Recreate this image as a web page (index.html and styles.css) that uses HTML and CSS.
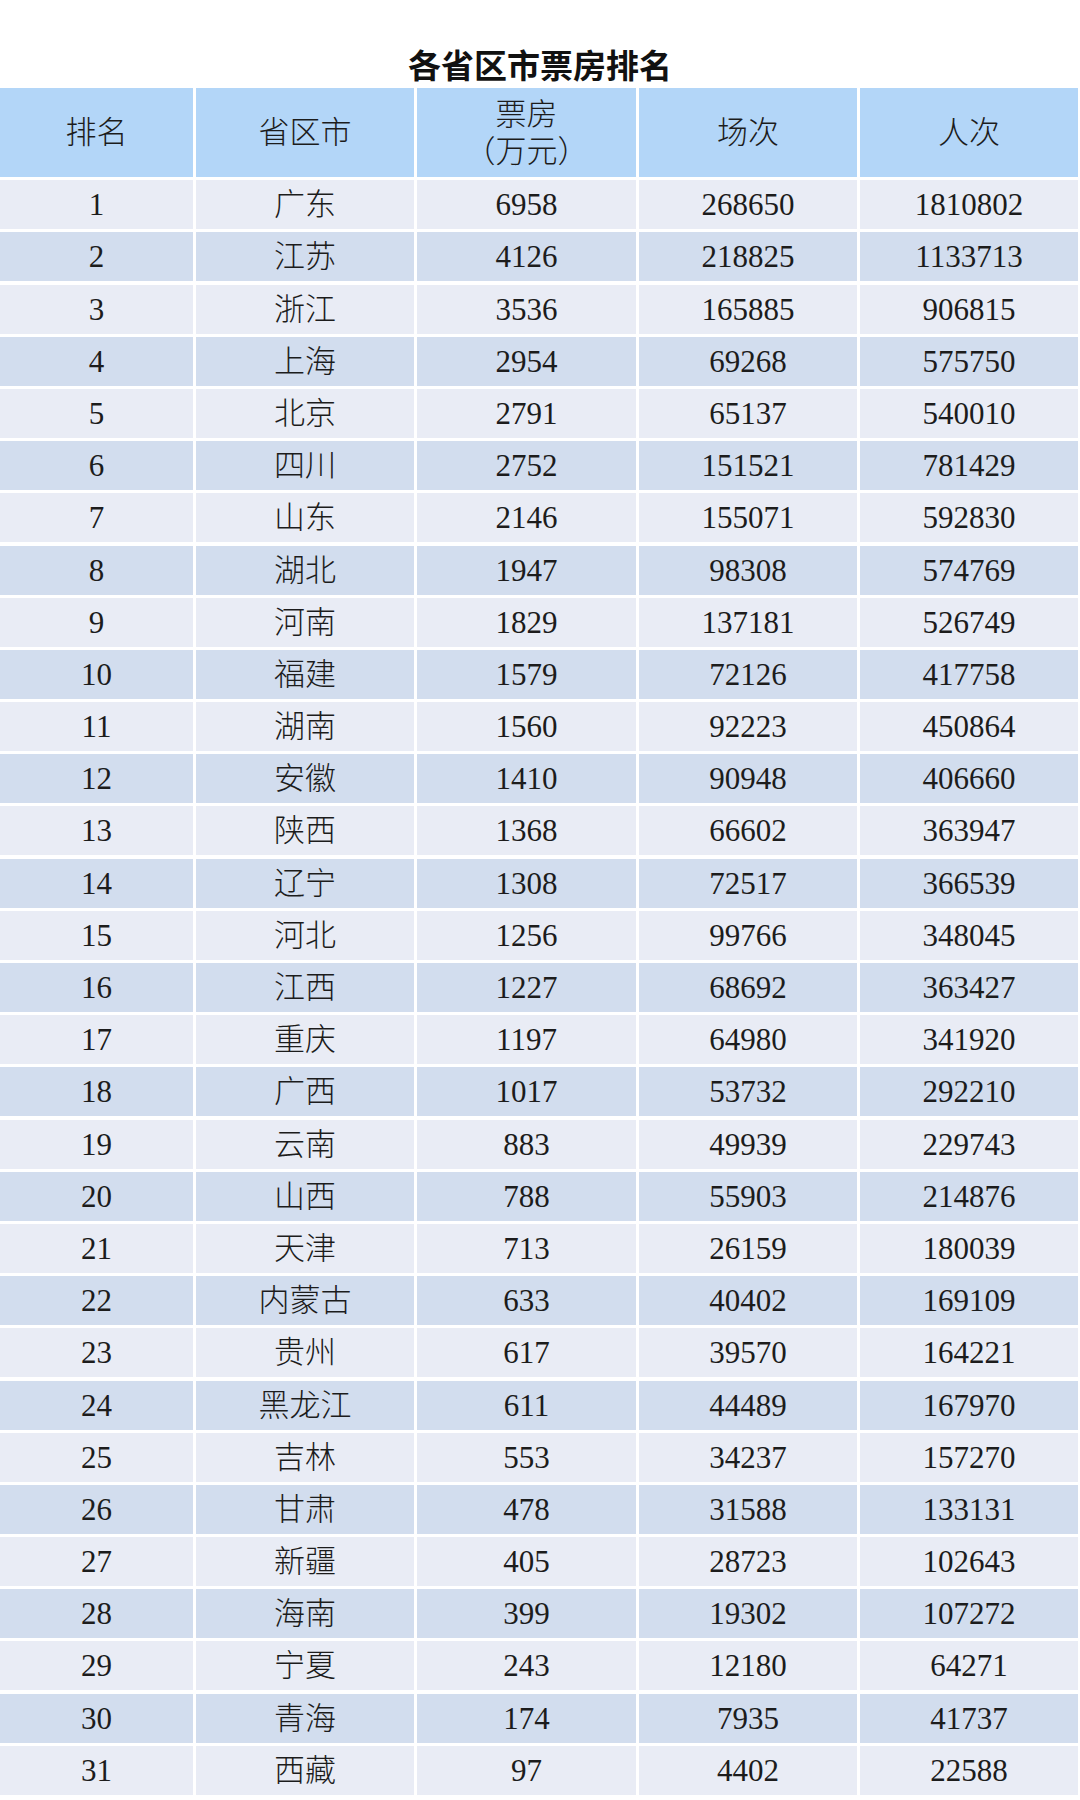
FILE: index.html
```html
<!DOCTYPE html>
<html lang="zh-CN">
<head>
<meta charset="utf-8">
<title>各省区市票房排名</title>
<link rel="stylesheet" href="styles.css">
</head>
<body>
<div class="page">
  <h1 class="title">各省区市票房排名</h1>
  <div class="table">
    <div class="row head">
      <div class="cell">排名</div>
      <div class="cell">省区市</div>
      <div class="cell two"><span>票房</span><span>（万元）</span></div>
      <div class="cell">场次</div>
      <div class="cell">人次</div>
    </div>
    <div class="row odd"><div class="cell">1</div><div class="cell">广东</div><div class="cell">6958</div><div class="cell">268650</div><div class="cell">1810802</div></div>
    <div class="row even"><div class="cell">2</div><div class="cell">江苏</div><div class="cell">4126</div><div class="cell">218825</div><div class="cell">1133713</div></div>
    <div class="row odd"><div class="cell">3</div><div class="cell">浙江</div><div class="cell">3536</div><div class="cell">165885</div><div class="cell">906815</div></div>
    <div class="row even"><div class="cell">4</div><div class="cell">上海</div><div class="cell">2954</div><div class="cell">69268</div><div class="cell">575750</div></div>
    <div class="row odd"><div class="cell">5</div><div class="cell">北京</div><div class="cell">2791</div><div class="cell">65137</div><div class="cell">540010</div></div>
    <div class="row even"><div class="cell">6</div><div class="cell">四川</div><div class="cell">2752</div><div class="cell">151521</div><div class="cell">781429</div></div>
    <div class="row odd"><div class="cell">7</div><div class="cell">山东</div><div class="cell">2146</div><div class="cell">155071</div><div class="cell">592830</div></div>
    <div class="row even"><div class="cell">8</div><div class="cell">湖北</div><div class="cell">1947</div><div class="cell">98308</div><div class="cell">574769</div></div>
    <div class="row odd"><div class="cell">9</div><div class="cell">河南</div><div class="cell">1829</div><div class="cell">137181</div><div class="cell">526749</div></div>
    <div class="row even"><div class="cell">10</div><div class="cell">福建</div><div class="cell">1579</div><div class="cell">72126</div><div class="cell">417758</div></div>
    <div class="row odd"><div class="cell">11</div><div class="cell">湖南</div><div class="cell">1560</div><div class="cell">92223</div><div class="cell">450864</div></div>
    <div class="row even"><div class="cell">12</div><div class="cell">安徽</div><div class="cell">1410</div><div class="cell">90948</div><div class="cell">406660</div></div>
    <div class="row odd"><div class="cell">13</div><div class="cell">陕西</div><div class="cell">1368</div><div class="cell">66602</div><div class="cell">363947</div></div>
    <div class="row even"><div class="cell">14</div><div class="cell">辽宁</div><div class="cell">1308</div><div class="cell">72517</div><div class="cell">366539</div></div>
    <div class="row odd"><div class="cell">15</div><div class="cell">河北</div><div class="cell">1256</div><div class="cell">99766</div><div class="cell">348045</div></div>
    <div class="row even"><div class="cell">16</div><div class="cell">江西</div><div class="cell">1227</div><div class="cell">68692</div><div class="cell">363427</div></div>
    <div class="row odd"><div class="cell">17</div><div class="cell">重庆</div><div class="cell">1197</div><div class="cell">64980</div><div class="cell">341920</div></div>
    <div class="row even"><div class="cell">18</div><div class="cell">广西</div><div class="cell">1017</div><div class="cell">53732</div><div class="cell">292210</div></div>
    <div class="row odd"><div class="cell">19</div><div class="cell">云南</div><div class="cell">883</div><div class="cell">49939</div><div class="cell">229743</div></div>
    <div class="row even"><div class="cell">20</div><div class="cell">山西</div><div class="cell">788</div><div class="cell">55903</div><div class="cell">214876</div></div>
    <div class="row odd"><div class="cell">21</div><div class="cell">天津</div><div class="cell">713</div><div class="cell">26159</div><div class="cell">180039</div></div>
    <div class="row even"><div class="cell">22</div><div class="cell">内蒙古</div><div class="cell">633</div><div class="cell">40402</div><div class="cell">169109</div></div>
    <div class="row odd"><div class="cell">23</div><div class="cell">贵州</div><div class="cell">617</div><div class="cell">39570</div><div class="cell">164221</div></div>
    <div class="row even"><div class="cell">24</div><div class="cell">黑龙江</div><div class="cell">611</div><div class="cell">44489</div><div class="cell">167970</div></div>
    <div class="row odd"><div class="cell">25</div><div class="cell">吉林</div><div class="cell">553</div><div class="cell">34237</div><div class="cell">157270</div></div>
    <div class="row even"><div class="cell">26</div><div class="cell">甘肃</div><div class="cell">478</div><div class="cell">31588</div><div class="cell">133131</div></div>
    <div class="row odd"><div class="cell">27</div><div class="cell">新疆</div><div class="cell">405</div><div class="cell">28723</div><div class="cell">102643</div></div>
    <div class="row even"><div class="cell">28</div><div class="cell">海南</div><div class="cell">399</div><div class="cell">19302</div><div class="cell">107272</div></div>
    <div class="row odd"><div class="cell">29</div><div class="cell">宁夏</div><div class="cell">243</div><div class="cell">12180</div><div class="cell">64271</div></div>
    <div class="row even"><div class="cell">30</div><div class="cell">青海</div><div class="cell">174</div><div class="cell">7935</div><div class="cell">41737</div></div>
    <div class="row odd"><div class="cell">31</div><div class="cell">西藏</div><div class="cell">97</div><div class="cell">4402</div><div class="cell">22588</div></div>
  </div>
</div>
</body>
</html>
```

FILE: styles.css
```css
html, body {
  margin: 0;
  padding: 0;
  background: #ffffff;
}

.page {
  width: 1080px;
  height: 1800px;
  overflow: hidden;
}

.title {
  margin: 0;
  padding-top: 48px;
  height: 40px;
  line-height: 33px;
  font-family: "Noto Sans CJK SC", "Noto Sans", sans-serif;
  font-weight: 700;
  font-size: 33px;
  color: #111111;
  text-align: center;
  letter-spacing: 0;
}

.table {
  display: flex;
  flex-direction: column;
  gap: 3.2px;
  width: 1078px;
}

.row {
  display: grid;
  grid-template-columns: 193px 218px 219px 218px 218px;
  column-gap: 3px;
  height: 49px;
}

.row.head {
  height: 89px;
}

.cell {
  display: flex;
  align-items: center;
  justify-content: center;
  font-family: "Liberation Serif", "Noto Sans CJK SC", serif;
  font-weight: 300;
  font-size: 31px;
  color: #1c1c1c;
  line-height: 1;
}

.head .cell {
  background: #b3d6f8;
}

.cell.two {
  flex-direction: column;
  line-height: 37px;
}

.odd .cell {
  background: #e9ecf5;
}

.even .cell {
  background: #d2ddee;
}
```
